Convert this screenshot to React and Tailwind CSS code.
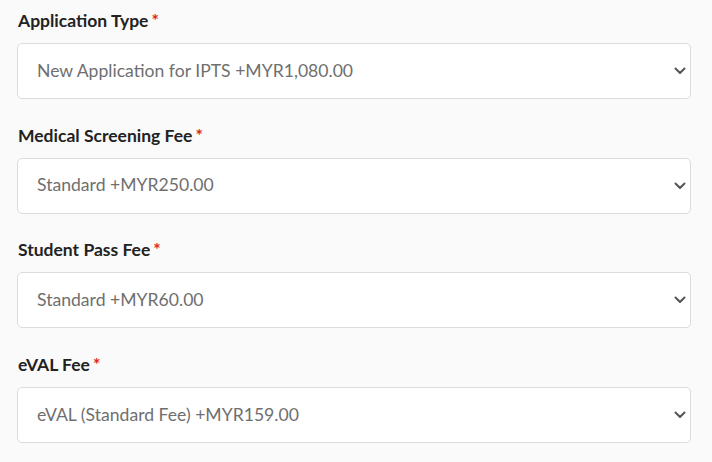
import React from "react";

const fields = [
  { label: "Application Type", value: "New Application for IPTS +MYR1,080.00" },
  { label: "Medical Screening Fee", value: "Standard +MYR250.00" },
  { label: "Student Pass Fee", value: "Standard +MYR60.00" },
  { label: "eVAL Fee", value: "eVAL (Standard Fee) +MYR159.00" },
];

const Chevron = () => (
  <svg width="12" height="8" viewBox="0 0 12 8" fill="none">
    <path d="M1.5 1.5 6 6l4.5-4.5" stroke="#555" strokeWidth="2" strokeLinecap="round" strokeLinejoin="round" />
  </svg>
);

export default function App() {
  return (
    <div
      className="w-[712px] h-[462px] bg-[#fafafa] pl-[17px] pr-[21px] pt-[7px] overflow-hidden"
      style={{ fontFamily: "Lato, 'Noto Sans', sans-serif" }}
    >
      <div className="flex flex-col gap-[22.7px]">
        {fields.map((f) => (
          <div key={f.label}>
            <div className="flex items-start h-[28px] text-[17.5px] font-bold text-[#222] leading-[28px] pl-[1px]">
              {f.label}
              <span className="text-[#e02424] ml-[3px] font-bold">*</span>
            </div>
            <div className="mt-[8px] h-[56px] bg-white border border-[#dcdcdc] rounded-[5px] flex items-center justify-between pl-[19px] pr-[4px]">
              <span className="text-[17.6px] text-[#6f6f6f]">{f.value}</span>
              <Chevron />
            </div>
          </div>
        ))}
      </div>
    </div>
  );
}
